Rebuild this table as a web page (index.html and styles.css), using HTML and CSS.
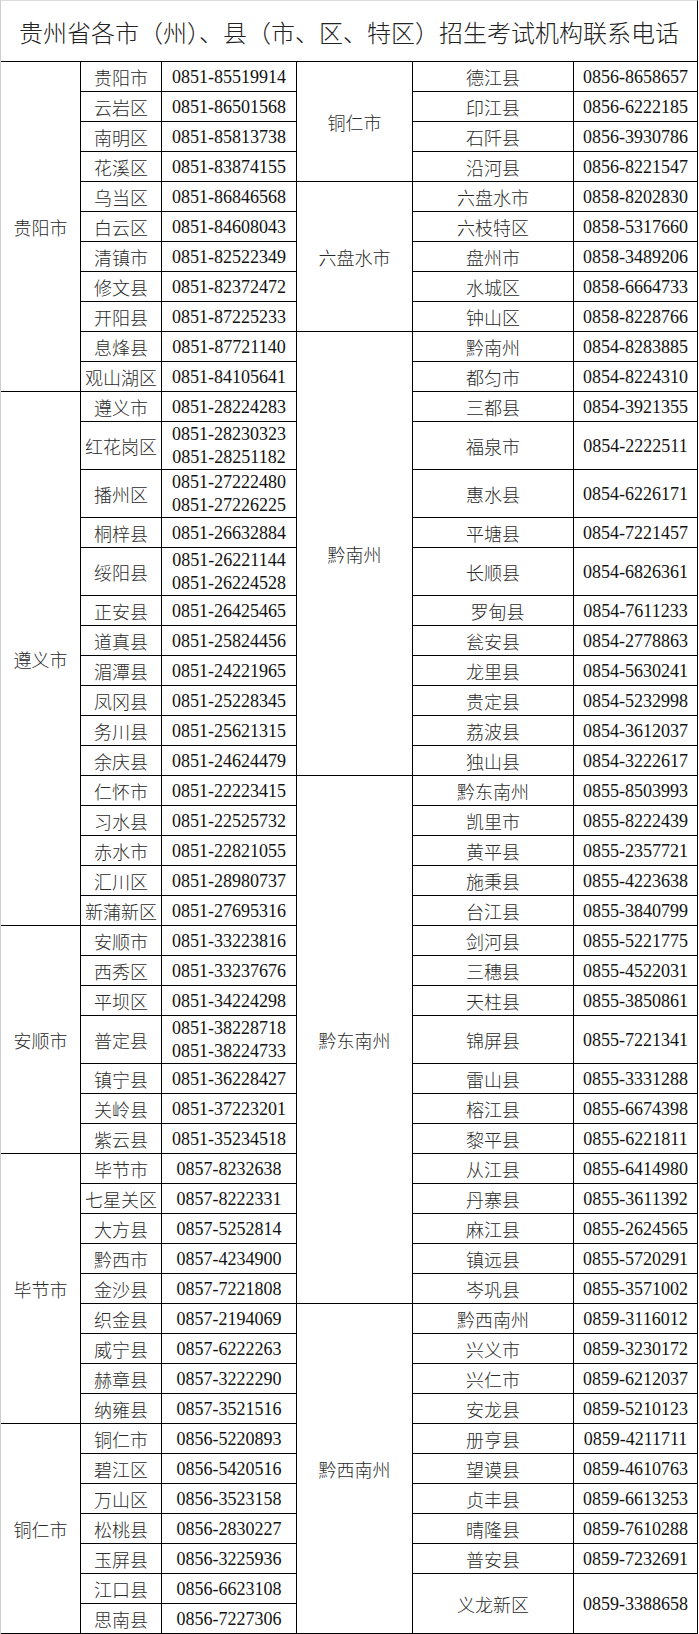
FILE: index.html
```html
<!DOCTYPE html>
<html lang="zh-CN">
<head>
<meta charset="utf-8">
<title>贵州省各市（州）、县（市、区、特区）招生考试机构联系电话</title>
<link rel="stylesheet" href="styles.css">
</head>
<body>
<div class="sheet">
  <div class="title">贵州省各市（州）、县（市、区、特区）招生考试机构联系电话</div>
  <table class="grid">
    <colgroup>
      <col class="c1"><col class="c2"><col class="c3"><col class="c4"><col class="c5"><col class="c6">
    </colgroup>
    <tbody>
      <tr><td rowspan="11">贵阳市</td><td>贵阳市</td><td class="ph">0851-85519914</td><td rowspan="4">铜仁市</td><td>德江县</td><td class="ph end">0856-8658657</td></tr>
      <tr><td>云岩区</td><td class="ph">0851-86501568</td><td>印江县</td><td class="ph end">0856-6222185</td></tr>
      <tr><td>南明区</td><td class="ph">0851-85813738</td><td>石阡县</td><td class="ph end">0856-3930786</td></tr>
      <tr><td>花溪区</td><td class="ph">0851-83874155</td><td>沿河县</td><td class="ph end">0856-8221547</td></tr>
      <tr><td>乌当区</td><td class="ph">0851-86846568</td><td rowspan="5">六盘水市</td><td>六盘水市</td><td class="ph end">0858-8202830</td></tr>
      <tr><td>白云区</td><td class="ph">0851-84608043</td><td>六枝特区</td><td class="ph end">0858-5317660</td></tr>
      <tr><td>清镇市</td><td class="ph">0851-82522349</td><td>盘州市</td><td class="ph end">0858-3489206</td></tr>
      <tr><td>修文县</td><td class="ph">0851-82372472</td><td>水城区</td><td class="ph end">0858-6664733</td></tr>
      <tr><td>开阳县</td><td class="ph">0851-87225233</td><td>钟山区</td><td class="ph end">0858-8228766</td></tr>
      <tr><td>息烽县</td><td class="ph">0851-87721140</td><td rowspan="13">黔南州</td><td>黔南州</td><td class="ph end">0854-8283885</td></tr>
      <tr><td>观山湖区</td><td class="ph">0851-84105641</td><td>都匀市</td><td class="ph end">0854-8224310</td></tr>
      <tr><td rowspan="16">遵义市</td><td>遵义市</td><td class="ph">0851-28224283</td><td>三都县</td><td class="ph end">0854-3921355</td></tr>
      <tr class="d"><td>红花岗区</td><td class="ph">0851-28230323<br>0851-28251182</td><td>福泉市</td><td class="ph end">0854-2222511</td></tr>
      <tr class="d"><td>播州区</td><td class="ph">0851-27222480<br>0851-27226225</td><td>惠水县</td><td class="ph end">0854-6226171</td></tr>
      <tr><td>桐梓县</td><td class="ph">0851-26632884</td><td>平塘县</td><td class="ph end">0854-7221457</td></tr>
      <tr class="d"><td>绥阳县</td><td class="ph">0851-26221144<br>0851-26224528</td><td>长顺县</td><td class="ph end">0854-6826361</td></tr>
      <tr><td>正安县</td><td class="ph">0851-26425465</td><td class="nudge">罗甸县</td><td class="ph end">0854-7611233</td></tr>
      <tr><td>道真县</td><td class="ph">0851-25824456</td><td>瓮安县</td><td class="ph end">0854-2778863</td></tr>
      <tr><td>湄潭县</td><td class="ph">0851-24221965</td><td>龙里县</td><td class="ph end">0854-5630241</td></tr>
      <tr><td>凤冈县</td><td class="ph">0851-25228345</td><td>贵定县</td><td class="ph end">0854-5232998</td></tr>
      <tr><td>务川县</td><td class="ph">0851-25621315</td><td>荔波县</td><td class="ph end">0854-3612037</td></tr>
      <tr><td>余庆县</td><td class="ph">0851-24624479</td><td>独山县</td><td class="ph end">0854-3222617</td></tr>
      <tr><td>仁怀市</td><td class="ph">0851-22223415</td><td rowspan="17">黔东南州</td><td>黔东南州</td><td class="ph end">0855-8503993</td></tr>
      <tr><td>习水县</td><td class="ph">0851-22525732</td><td>凯里市</td><td class="ph end">0855-8222439</td></tr>
      <tr><td>赤水市</td><td class="ph">0851-22821055</td><td>黄平县</td><td class="ph end">0855-2357721</td></tr>
      <tr><td>汇川区</td><td class="ph">0851-28980737</td><td>施秉县</td><td class="ph end">0855-4223638</td></tr>
      <tr><td>新蒲新区</td><td class="ph">0851-27695316</td><td>台江县</td><td class="ph end">0855-3840799</td></tr>
      <tr><td rowspan="7">安顺市</td><td>安顺市</td><td class="ph">0851-33223816</td><td>剑河县</td><td class="ph end">0855-5221775</td></tr>
      <tr><td>西秀区</td><td class="ph">0851-33237676</td><td>三穗县</td><td class="ph end">0855-4522031</td></tr>
      <tr><td>平坝区</td><td class="ph">0851-34224298</td><td>天柱县</td><td class="ph end">0855-3850861</td></tr>
      <tr class="d"><td>普定县</td><td class="ph">0851-38228718<br>0851-38224733</td><td>锦屏县</td><td class="ph end">0855-7221341</td></tr>
      <tr><td>镇宁县</td><td class="ph">0851-36228427</td><td>雷山县</td><td class="ph end">0855-3331288</td></tr>
      <tr><td>关岭县</td><td class="ph">0851-37223201</td><td>榕江县</td><td class="ph end">0855-6674398</td></tr>
      <tr><td>紫云县</td><td class="ph">0851-35234518</td><td>黎平县</td><td class="ph end">0855-6221811</td></tr>
      <tr><td rowspan="9">毕节市</td><td>毕节市</td><td class="ph">0857-8232638</td><td>从江县</td><td class="ph end">0855-6414980</td></tr>
      <tr><td>七星关区</td><td class="ph">0857-8222331</td><td>丹寨县</td><td class="ph end">0855-3611392</td></tr>
      <tr><td>大方县</td><td class="ph">0857-5252814</td><td>麻江县</td><td class="ph end">0855-2624565</td></tr>
      <tr><td>黔西市</td><td class="ph">0857-4234900</td><td>镇远县</td><td class="ph end">0855-5720291</td></tr>
      <tr><td>金沙县</td><td class="ph">0857-7221808</td><td>岑巩县</td><td class="ph end">0855-3571002</td></tr>
      <tr><td>织金县</td><td class="ph">0857-2194069</td><td rowspan="11">黔西南州</td><td>黔西南州</td><td class="ph end">0859-3116012</td></tr>
      <tr><td>威宁县</td><td class="ph">0857-6222263</td><td>兴义市</td><td class="ph end">0859-3230172</td></tr>
      <tr><td>赫章县</td><td class="ph">0857-3222290</td><td>兴仁市</td><td class="ph end">0859-6212037</td></tr>
      <tr><td>纳雍县</td><td class="ph">0857-3521516</td><td>安龙县</td><td class="ph end">0859-5210123</td></tr>
      <tr><td rowspan="7">铜仁市</td><td>铜仁市</td><td class="ph">0856-5220893</td><td>册亨县</td><td class="ph end">0859-4211711</td></tr>
      <tr><td>碧江区</td><td class="ph">0856-5420516</td><td>望谟县</td><td class="ph end">0859-4610763</td></tr>
      <tr><td>万山区</td><td class="ph">0856-3523158</td><td>贞丰县</td><td class="ph end">0859-6613253</td></tr>
      <tr><td>松桃县</td><td class="ph">0856-2830227</td><td>晴隆县</td><td class="ph end">0859-7610288</td></tr>
      <tr><td>玉屏县</td><td class="ph">0856-3225936</td><td>普安县</td><td class="ph end">0859-7232691</td></tr>
      <tr><td>江口县</td><td class="ph">0856-6623108</td><td rowspan="2">义龙新区</td><td rowspan="2" class="ph end">0859-3388658</td></tr>
      <tr><td>思南县</td><td class="ph">0856-7227306</td></tr>
    </tbody>
  </table>
</div>
</body>
</html>
```
FILE: styles.css
```css
html, body {
  margin: 0;
  padding: 0;
  background: #ffffff;
}

.sheet {
  width: 696px;
  border-top: 1px solid #dcdcdc;
  border-left: 1px solid #cdcdcd;
  border-right: 1px solid #000000;
  background: #ffffff;
}

.title {
  height: 60px;
  border-bottom: 1px solid #000000;
  display: flex;
  align-items: center;
  justify-content: center;
  font-family: "Noto Sans CJK SC", sans-serif;
  font-weight: 300;
  font-size: 24px;
  color: #222222;
}

.grid {
  width: 696px;
  table-layout: fixed;
  border-collapse: separate;
  border-spacing: 0;
}

.c1 { width: 80px; }
.c2 { width: 81px; }
.c3 { width: 135px; }
.c4 { width: 116px; }
.c5 { width: 161px; }
.c6 { width: 123px; }

.grid tr { height: 30px; }
.grid tr.d { height: 48px; }

.grid td {
  border-right: 1px solid #000000;
  border-bottom: 1px solid #000000;
  padding: 1px 0 0 0;
  text-align: center;
  vertical-align: middle;
  font-family: "Noto Sans CJK SC", sans-serif;
  font-weight: 300;
  font-size: 18px;
  line-height: 22px;
  color: #2a2a2a;
  white-space: nowrap;
  overflow: hidden;
}

.grid td.ph {
  font-family: "Liberation Serif", "Noto Sans CJK SC", serif;
  font-weight: 400;
  color: #111111;
  line-height: 22px;
}

.grid tr.d td.ph {
  line-height: 23px;
}

.grid td.end {
  border-right: none;
}

.grid td.nudge {
  padding-left: 9px;
}
```
